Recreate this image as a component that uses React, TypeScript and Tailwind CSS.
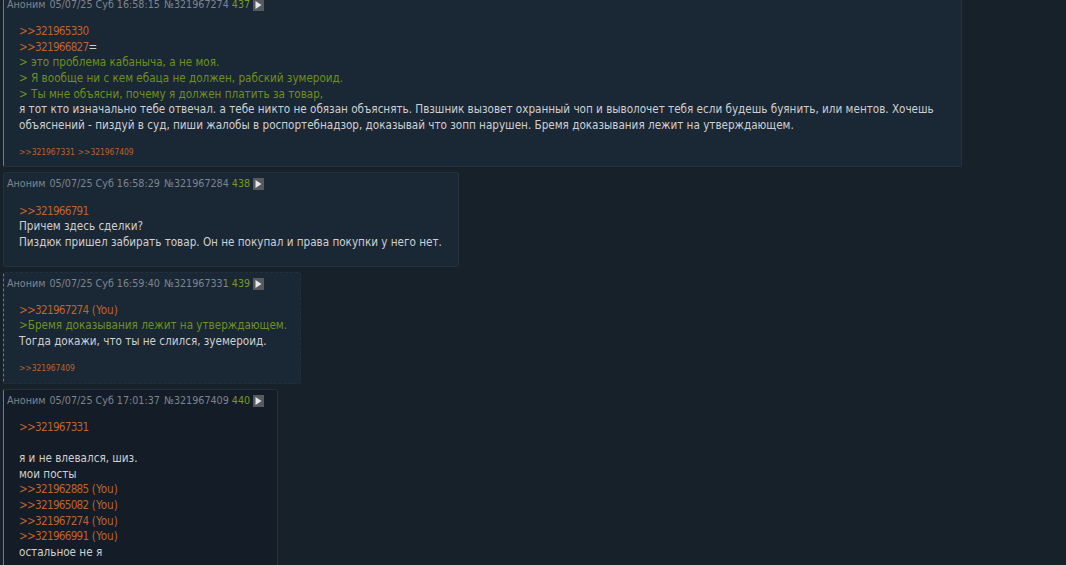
type Line = { kind: "link" | "quote" | "text"; text: string; extra?: string };

type PostData = {
  date: string;
  id: string;
  num: string;
  width: string;
  marker: string;
  bg: string;
  lines: Line[];
  replies?: string[];
  bodyClass: string;
  footClass?: string;
};

const posts: PostData[] = [
  {
    date: "05/07/25 Суб 16:58:15",
    id: "321967274",
    num: "437",
    width: "w-[959px]",
    marker: "border-l border-l-[#b5682f]",
    bg: "bg-[#1a2735]",
    bodyClass: "pt-[11px]",
    footClass: "mt-[12px] pb-[8px]",
    lines: [
      { kind: "link", text: ">>321965330" },
      { kind: "link", text: ">>321966827", extra: "=" },
      { kind: "quote", text: "> это проблема кабаныча, а не моя." },
      { kind: "quote", text: "> Я вообще ни с кем ебаца не должен, рабский зумероид." },
      { kind: "quote", text: "> Ты мне объясни, почему я должен платить за товар," },
      { kind: "text", text: "я тот кто изначально тебе отвечал. а тебе никто не обязан объяснять. Пвзшник вызовет охранный чоп и выволочет тебя если будешь буянить, или ментов. Хочешь" },
      { kind: "text", text: "объяснений - пиздуй в суд, пиши жалобы в роспортебнадзор, доказывай что зопп нарушен. Бремя доказывания лежит на утверждающем." },
    ],
    replies: ["321967331", "321967409"],
  },
  {
    date: "05/07/25 Суб 16:58:29",
    id: "321967284",
    num: "438",
    width: "w-[456px]",
    marker: "border-l border-l-[#24303e]",
    bg: "bg-[#1a2735]",
    bodyClass: "pt-[12px] pb-[15px]",
    lines: [
      { kind: "link", text: ">>321966791" },
      { kind: "text", text: "Причем здесь сделки?" },
      { kind: "text", text: "Пиздюк пришел забирать товар. Он не покупал и права покупки у него нет." },
    ],
  },
  {
    date: "05/07/25 Суб 16:59:40",
    id: "321967331",
    num: "439",
    width: "w-[298px]",
    marker: "border-l border-dashed border-l-[#b5682f]",
    bg: "bg-[#1a2735]",
    bodyClass: "pt-[11px]",
    footClass: "mt-[12px] pb-[9px]",
    lines: [
      { kind: "link", text: ">>321967274", extra: " (You)" },
      { kind: "quote", text: ">Бремя доказывания лежит на утверждающем." },
      { kind: "text", text: "Тогда докажи, что ты не слился, зуемероид." },
    ],
    replies: ["321967409"],
  },
  {
    date: "05/07/25 Суб 17:01:37",
    id: "321967409",
    num: "440",
    width: "w-[275px]",
    marker: "border-l border-l-[#b5682f]",
    bg: "bg-[#131c27]",
    bodyClass: "pt-[11px] pb-[24px]",
    lines: [
      { kind: "link", text: ">>321967331" },
      { kind: "text", text: "\u00a0" },
      { kind: "text", text: "я и не влевался, шиз." },
      { kind: "text", text: "мои посты" },
      { kind: "link", text: ">>321962885", extra: " (You)" },
      { kind: "link", text: ">>321965082", extra: " (You)" },
      { kind: "link", text: ">>321967274", extra: " (You)" },
      { kind: "link", text: ">>321966991", extra: " (You)" },
      { kind: "text", text: "остальное не я" },
    ],
  },
];

function PostLine({ line }: { line: Line }) {
  if (line.kind === "quote") return <div className="text-[#6f9020]">{line.text}</div>;
  if (line.kind === "text") return <div className="text-[#d0d0d0]">{line.text}</div>;
  const orangeExtra = line.extra?.includes("You");
  return (
    <div className="text-[#bd6529]">
      <span className="tracking-[-0.7px]">{line.text}</span>
      {line.extra && <span className={orangeExtra ? "text-[#bd6529]" : "text-[#d0d0d0]"}>{line.extra}</span>}
    </div>
  );
}

function Post({ post }: { post: PostData }) {
  return (
    <div className={`${post.width} ${post.bg} ${post.marker} rounded-[2px] border-y border-r border-y-[#24303e] border-r-[#24303e] pl-[3px] pt-[3px]`}>
      <div className="flex h-[16px] items-center text-[10.66px] whitespace-nowrap text-[#7f858c]">
        <span>Аноним</span>
        <span className="ml-[4px]">{post.date}</span>
        <span className="ml-[4px]">№{post.id}</span>
        <span className="ml-[3px] text-[#789922]">{post.num}</span>
        <span className="ml-[3px] flex h-[12px] w-[11px] items-center justify-center bg-[#565a5e]">
          <svg width="7" height="8" viewBox="0 0 7 8"><path d="M0.5 0 L6.5 4 L0.5 8 Z" fill="#e6e6e6" /></svg>
        </span>
      </div>
      <div className={`${post.bodyClass} pl-[12px] text-[11.6px] leading-[15.67px] whitespace-nowrap`}>
        {post.lines.map((l, i) => <PostLine key={i} line={l} />)}
      </div>
      {post.replies && (
        <div className={`${post.footClass} pl-[12px] text-[8.4px] leading-[12px] text-[#bd6529]`}>
          {post.replies.map((r) => <span key={r} className="mr-[3px]">&gt;&gt;{r}</span>)}
        </div>
      )}
    </div>
  );
}

export default function App() {
  return (
    <div className="h-[565px] w-[1066px] overflow-hidden bg-[#17212a]">
      <div className="-mt-[7px] flex flex-col gap-[5px] pl-[3px] font-['DejaVu_Sans_Condensed',sans-serif]">
        {posts.map((p) => <Post key={p.id} post={p} />)}
      </div>
    </div>
  );
}
